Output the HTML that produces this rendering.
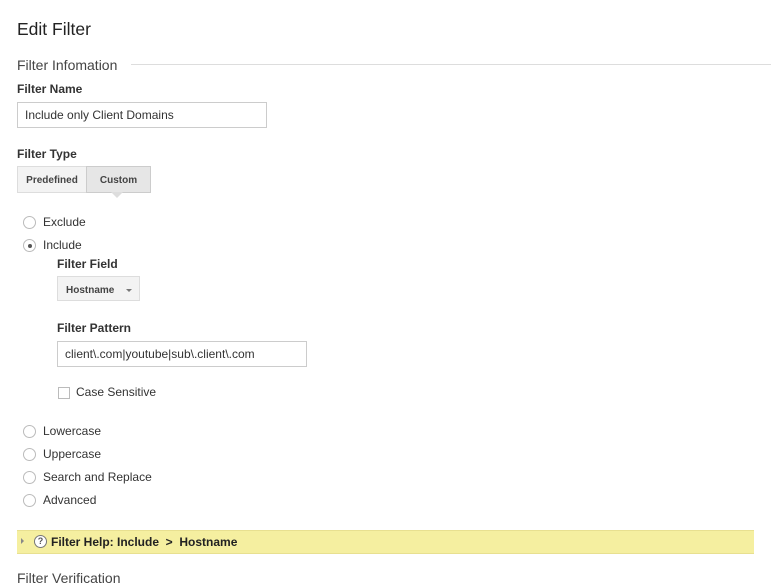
<!DOCTYPE html>
<html><head><style>
body{margin:0;width:771px;height:579px;background:#fff;font-family:"Liberation Sans",Arial,sans-serif;color:#222;position:relative;overflow:hidden}
.a{position:absolute;white-space:nowrap}
.lbl{font-size:12px;font-weight:bold;color:#333}
.t{font-size:12px;color:#333}
.inp{position:absolute;border:1px solid #ccc;background:#fff;font-size:12px;color:#333;box-sizing:border-box;padding-left:7px;line-height:24px}
.rad{position:absolute;width:11px;height:11px;border:1px solid #bbb;border-radius:50%;background:#fff}
</style></head><body>
<div class="a" style="left:17px;top:19px;font-size:17.5px;color:#222">Edit Filter</div>
<div class="a" style="left:17px;top:57px;font-size:14px;color:#444">Filter Infomation</div>
<div class="a" style="left:131px;top:64px;width:640px;height:1px;background:#ddd"></div>
<div class="a lbl" style="left:17px;top:82px">Filter Name</div>
<div class="inp" style="left:17px;top:102px;width:250px;height:26px">Include only Client Domains</div>
<div class="a lbl" style="left:17px;top:147px">Filter Type</div>
<div class="a" style="left:17px;top:166px;width:68px;height:25px;background:#f3f3f3;border:1px solid #ddd;font-size:10px;font-weight:bold;color:#444;text-align:center;line-height:27px">Predefined</div>
<div class="a" style="left:86px;top:166px;width:63px;height:25px;background:#e6e6e6;border:1px solid #ccc;font-size:10px;font-weight:bold;color:#444;text-align:center;line-height:27px">Custom</div>
<div class="a" style="left:111px;top:192px;width:0;height:0;border-left:6px solid transparent;border-right:6px solid transparent;border-top:6px solid #ddd"></div>
<div class="rad" style="left:23px;top:216px"></div><div class="a t" style="left:43px;top:215px">Exclude</div>
<div class="rad" style="left:23px;top:239px"></div><div class="a" style="left:28px;top:244px;width:4px;height:4px;border-radius:50%;background:#555"></div><div class="a t" style="left:43px;top:238px">Include</div>
<div class="a lbl" style="left:57px;top:257px">Filter Field</div>
<div class="a" style="left:57px;top:276px;width:83px;height:25px;background:#f3f3f3;border:1px solid #ddd;font-size:10px;font-weight:bold;color:#444;line-height:27px;padding-left:8px;box-sizing:border-box">Hostname</div>
<div class="a" style="left:126px;top:289px;border-left:3px solid transparent;border-right:3px solid transparent;border-top:3px solid #777"></div>
<div class="a lbl" style="left:57px;top:321px">Filter Pattern</div>
<div class="inp" style="left:57px;top:341px;width:250px;height:26px">client\.com|youtube|sub\.client\.com</div>
<div class="a" style="left:58px;top:387px;width:10px;height:10px;border:1px solid #bbb"></div>
<div class="a t" style="left:76px;top:385px">Case Sensitive</div>
<div class="rad" style="left:23px;top:425px"></div><div class="a t" style="left:43px;top:424px">Lowercase</div>
<div class="rad" style="left:23px;top:448px"></div><div class="a t" style="left:43px;top:447px">Uppercase</div>
<div class="rad" style="left:23px;top:471px"></div><div class="a t" style="left:43px;top:470px">Search and Replace</div>
<div class="rad" style="left:23px;top:494px"></div><div class="a t" style="left:43px;top:493px">Advanced</div>
<div class="a" style="left:17px;top:530px;width:737px;height:22px;background:#f5efa0;border-top:1px solid #e8e090;border-bottom:1px solid #e8e090"></div>
<div class="a" style="left:21px;top:538px;border-top:3px solid transparent;border-bottom:3px solid transparent;border-left:3px solid #888"></div>
<div class="a" style="left:34px;top:535px;width:11px;height:11px;border:1px solid #777;border-radius:50%;font-size:9px;font-weight:bold;text-align:center;line-height:11px;color:#555;background:#fff">?</div>
<div class="a" style="left:51px;top:535px;font-size:12px;font-weight:bold;color:#222">Filter Help: Include &nbsp;&gt;&nbsp; Hostname</div>
<div class="a" style="left:17px;top:570px;font-size:14px;color:#444">Filter Verification</div>
</body></html>
